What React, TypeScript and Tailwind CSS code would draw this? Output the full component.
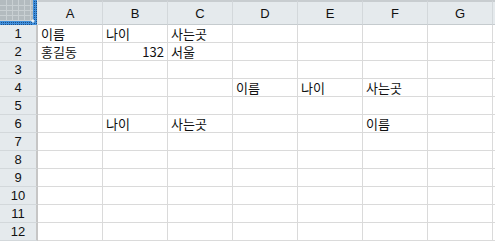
import { Fragment } from "react";

const columns = ["A", "B", "C", "D", "E", "F", "G"];
const rowCount = 12;

// sparse sheet contents keyed by "col:row"
const cells: Record<string, { value: string; numeric?: boolean }> = {
  "A:1": { value: "이름" },
  "B:1": { value: "나이" },
  "C:1": { value: "사는곳" },
  "A:2": { value: "홍길동" },
  "B:2": { value: "132", numeric: true },
  "C:2": { value: "서울" },
  "D:4": { value: "이름" },
  "E:4": { value: "나이" },
  "F:4": { value: "사는곳" },
  "B:6": { value: "나이" },
  "C:6": { value: "사는곳" },
  "F:6": { value: "이름" },
};

function SelectAllCorner() {
  const lines = [];
  for (let x = 6; x < 33; x += 6) lines.push(<rect key={`v${x}`} x={x} y={0} width={1} height={21} fill="#c9d0d3" />);
  for (let y = 5; y < 21; y += 5) lines.push(<rect key={`h${y}`} x={0} y={y} width={33} height={1} fill="#c9d0d3" />);
  const dots = [];
  for (let y = 1; y < 25; y += 2) {
    dots.push(<rect key={`rd${y}`} x={34} y={y} width={1} height={1} fill="#1d4f86" />);
    dots.push(<rect key={`rd2${y}`} x={36} y={y} width={1} height={1} fill="#1d4f86" />);
  }
  for (let x = 1; x < 33; x += 2) {
    dots.push(<rect key={`bd${x}`} x={x} y={22} width={1} height={1} fill="#1d4f86" />);
    dots.push(<rect key={`bd2${x}`} x={x} y={24} width={1} height={1} fill="#1d4f86" />);
  }
  return (
    <svg width="38" height="25" viewBox="0 0 38 25" className="block">
      <rect x={0} y={0} width={33} height={21} fill="#b3bbbf" />
      {lines}
      <rect x={33} y={0} width={4} height={25} fill="#3f8fdc" />
      <rect x={0} y={21} width={37} height={4} fill="#3f8fdc" />
      {dots}
      <polygon points="31,21 33,19 35,21 33,23" fill="#ffffff" opacity="0.8" />
      <rect x={37} y={0} width={1} height={25} fill="#dfe4e7" />
    </svg>
  );
}

export default function App() {
  const rows = Array.from({ length: rowCount }, (_, i) => i + 1);

  return (
    <div className="w-[495px] h-[241px] overflow-hidden bg-white font-['Liberation_Sans',sans-serif] text-[13px] text-[#111]">
      <div className="grid grid-cols-[38px_repeat(7,65px)_1fr] grid-rows-[25px_repeat(12,18px)]">
        {/* column header row */}
        <SelectAllCorner />
        {columns.map((col) => (
          <div
            key={col}
            className="flex items-center justify-center border-t-2 border-b border-r border-t-[#c8cdd0] border-b-[#c5cbce] border-r-[#d3d8db] bg-[#e5eaed] pt-px"
          >
            {col}
          </div>
        ))}
        <div className="border-t-2 border-b border-t-[#c8cdd0] border-b-[#c5cbce] bg-[#e5eaed]" />

        {rows.map((row) => (
          <Fragment key={row}>
            <div className="flex items-center justify-center border-r-2 border-b border-r-[#c6c6c6] border-b-[#d3d8db] bg-[#e5eaed] text-[13px]">
              {row}
            </div>
            {columns.map((col) => {
              const cell = cells[`${col}:${row}`];
              return (
                <div
                  key={col}
                  className={`flex items-center overflow-hidden whitespace-nowrap border-r border-b border-[#dadada] px-[3px] font-['Noto_Sans_CJK_KR',sans-serif] text-[13px] leading-none ${
                    cell?.numeric ? "justify-end font-['Liberation_Sans',sans-serif]" : "justify-start"
                  }`}
                >
                  {cell?.value}
                </div>
              );
            })}
            <div className="border-b border-[#dadada]" />
          </Fragment>
        ))}
      </div>
    </div>
  );
}
